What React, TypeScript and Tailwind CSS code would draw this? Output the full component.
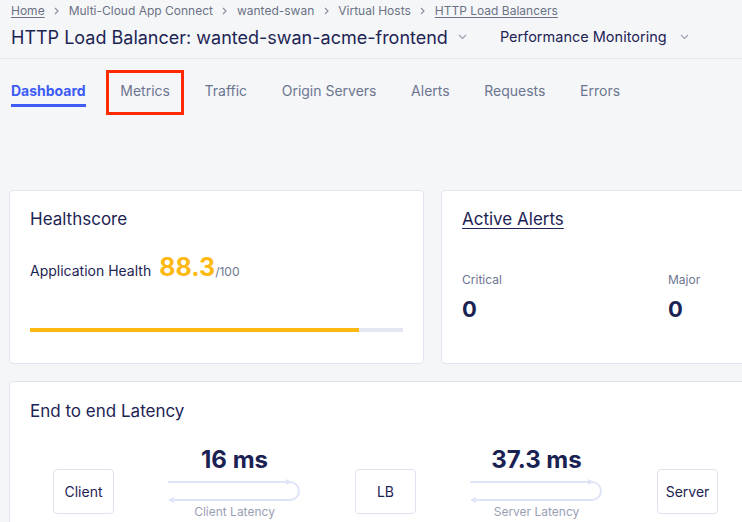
import React from "react";

const Chevron = ({ className = "" }: { className?: string }) => (
  <svg width="9" height="6" viewBox="0 0 9 6" className={className}>
    <polyline points="1,1 4.5,4.5 8,1" fill="none" stroke="#9aa1b4" strokeWidth="1.2" />
  </svg>
);

const Sep = () => (
  <svg width="5" height="8" viewBox="0 0 5 8" className="mx-[9.5px]">
    <polyline points="1,1 4,4 1,7" fill="none" stroke="#8a90a2" strokeWidth="1.2" />
  </svg>
);

const LatencyArrows = () => (
  <svg width="133" height="26" viewBox="0 0 133 26">
    <line x1="0" y1="4" x2="120" y2="4" stroke="#dfe4f6" strokeWidth="2" />
    <polygon points="118,1 124,4 118,7" fill="#dfe4f6" />
    <path d="M122 4 A9 9 0 0 1 122 22" fill="none" stroke="#dfe4f6" strokeWidth="2" />
    <line x1="122" y1="22" x2="4" y2="22" stroke="#dfe4f6" strokeWidth="2" />
    <polygon points="6,19 0,22 6,25" fill="#dfe4f6" />
  </svg>
);

const Node = ({ label }: { label: string }) => (
  <div className="mt-[23px] w-[61px] h-[45px] shrink-0 rounded-[4px] border border-[#dfe3ee] flex items-center justify-center text-[14px] text-[#1d2454]">
    {label}
  </div>
);

const Hop = ({ value, label }: { value: string; label: string }) => (
  <div className="w-[133px] shrink-0 flex flex-col items-center">
    <div className="text-[24px] leading-[28px] font-bold text-[#1a2253]">{value}</div>
    <div className="mt-[4px] h-[26px]">
      <LatencyArrows />
    </div>
    <div className="text-[12px] leading-[16px] text-[#9aa0b4]">{label}</div>
  </div>
);

const tabs = ["Dashboard", "Metrics", "Traffic", "Origin Servers", "Alerts", "Requests", "Errors"];

export default function App() {
  return (
    <div
      className="w-[742px] h-[522px] overflow-hidden bg-[#f5f6f8]"
      style={{ fontFamily: "Inter, 'Noto Sans', sans-serif" }}
    >
      <div className="w-[880px]">
        {/* header */}
        <div className="h-[59px] px-[11px] pt-[3px] border-b border-[#e4e7f1]">
          <div className="flex items-center h-[16px] text-[12px] leading-[16px] text-[#6b7286]">
            <span className="underline underline-offset-2">Home</span>
            <Sep />
            <span>Multi-Cloud App Connect</span>
            <Sep />
            <span>wanted-swan</span>
            <Sep />
            <span>Virtual Hosts</span>
            <Sep />
            <span className="underline underline-offset-2">HTTP Load Balancers</span>
          </div>
          <div className="flex items-center h-[36px] text-[#1d2454]">
            <span className="text-[18px]">HTTP Load Balancer: wanted-swan-acme-frontend</span>
            <Chevron className="ml-[10px]" />
            <span className="ml-[33px] text-[14.5px]">Performance Monitoring</span>
            <Chevron className="ml-[13px]" />
          </div>
        </div>

        {/* tabs */}
        <div className="flex gap-[34.6px] px-[11px]">
          {tabs.map((t, i) => (
            <div
              key={t}
              className={
                i === 0
                  ? "pt-[22px] pb-[3px] leading-[20px] text-[14px] font-bold text-[#3d5cf5] border-b-[3px] border-[#3d5cf5]"
                  : "relative pt-[22px] pb-[3px] leading-[20px] text-[14px] text-[#6c7590] border-b-[3px] border-transparent"
              }
            >
              {t}
              {t === "Metrics" && (
                <span className="absolute left-[-14px] right-[-14px] top-[11px] bottom-[-11px] border-[3px] border-[#ff2a00]" />
              )}
            </div>
          ))}
        </div>

        {/* cards */}
        <div className="px-[9px] mt-[83px] flex flex-col gap-[17px]">
          <div className="flex gap-[17px]">
            <div className="w-[415px] h-[174px] bg-white rounded-[4px] border border-[#e0e4ef] px-[20px] pt-[16px]">
              <div className="text-[17px] leading-[24px] text-[#1d2454]">Healthscore</div>
              <div className="mt-[21px] flex items-baseline">
                <span className="text-[14px] text-[#1d2454]">Application Health</span>
                <span className="ml-[8px] text-[25px] leading-[30px] font-bold text-[#fdb812]">88.3</span>
                <span className="text-[12px] text-[#6c7590]">/100</span>
              </div>
              <div className="mt-[46px] h-[4px] bg-[#e3e7f0]">
                <div className="h-full bg-[#fdb812]" style={{ width: "88.3%" }} />
              </div>
            </div>
            <div className="w-[415px] h-[174px] bg-white rounded-[4px] border border-[#e0e4ef] px-[20px] pt-[16px]">
              <div className="text-[17px] leading-[24px] text-[#1d2454] underline underline-offset-[3px]">Active Alerts</div>
              <div className="mt-[41px] flex">
                <div className="w-[206px]">
                  <div className="text-[12px] leading-[16px] text-[#6c7590]">Critical</div>
                  <div className="mt-[8px] text-[22px] leading-[26px] font-bold text-[#1a2253]">0</div>
                </div>
                <div className="w-[150px]">
                  <div className="text-[12px] leading-[16px] text-[#6c7590]">Major</div>
                  <div className="mt-[8px] text-[22px] leading-[26px] font-bold text-[#1a2253]">0</div>
                </div>
              </div>
            </div>
          </div>

          <div className="w-[847px] h-[200px] bg-white rounded-[4px] border border-[#e0e4ef] pt-[17px]">
            <div className="px-[20px] text-[17px] leading-[24px] text-[#1d2454]">End to end Latency</div>
            <div className="mt-[23px] pl-[43px] flex items-start gap-[54px]">
              <Node label="Client" />
              <Hop value="16 ms" label="Client Latency" />
              <Node label="LB" />
              <Hop value="37.3 ms" label="Server Latency" />
              <Node label="Server" />
            </div>
          </div>
        </div>
      </div>
    </div>
  );
}
